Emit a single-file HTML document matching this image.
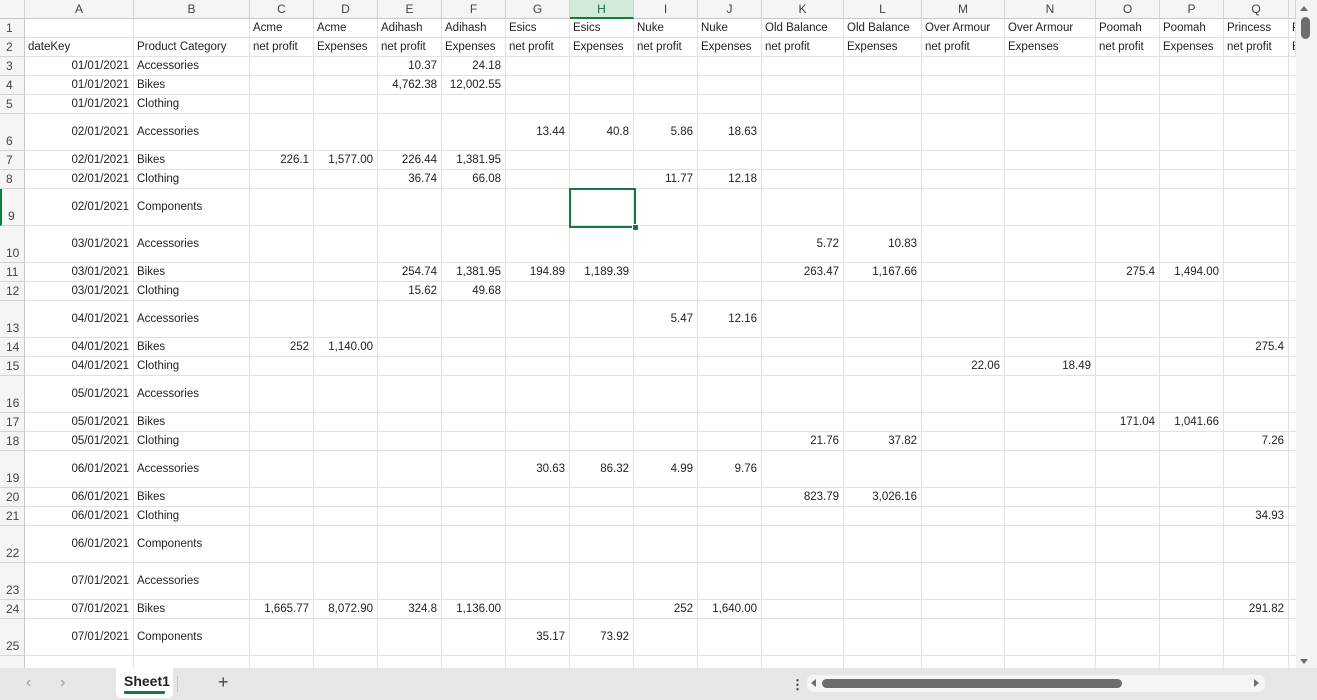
<!DOCTYPE html>
<html><head><meta charset="utf-8"><style>
body{margin:0;width:1317px;height:700px;overflow:hidden;background:#fff;font-family:"Liberation Sans",sans-serif;font-size:11.5px;color:#222;position:relative}
.c{position:absolute;box-sizing:border-box;border-right:1px solid #e1e1e1;border-bottom:1px solid #e1e1e1;white-space:nowrap;overflow:hidden;display:flex;align-items:center;padding:0 3px}
.r{justify-content:flex-end;padding-right:4px}
.ch{position:absolute;top:0;height:19px;box-sizing:border-box;border-right:1px solid #d4d4d4;border-bottom:1px solid #c8c8c8;background:#f5f5f5;color:#444;font-size:12px;display:flex;align-items:center;justify-content:center}
.rh{position:absolute;left:0;width:25px;box-sizing:border-box;border-bottom:1px solid #d4d4d4;border-right:1px solid #c8c8c8;background:#f5f5f5;color:#444;font-size:12px;display:flex;align-items:flex-end;padding:0 0 2px 6px}
</style></head><body>
<div id="g"></div>
<div style="position:absolute;left:569px;top:188px;width:67px;height:40px;box-sizing:border-box;border:2px solid #107c41"></div>
<div style="position:absolute;left:632px;top:224px;width:5px;height:5px;background:#107c41;border:1px solid #fff"></div>
<div style="position:absolute;left:1296px;top:0;width:21px;height:668px;background:#f3f3f3"></div>
<div style="position:absolute;left:1300px;top:6px;width:0;height:0;border-left:4px solid transparent;border-right:4px solid transparent;border-bottom:5px solid #6d6d6d"></div>
<div style="position:absolute;left:1301px;top:17px;width:9px;height:22px;border-radius:5px;background:#6d6d6d"></div>
<div style="position:absolute;left:1300px;top:659px;width:0;height:0;border-left:4px solid transparent;border-right:4px solid transparent;border-top:5px solid #6d6d6d"></div>
<div style="position:absolute;left:0;top:668px;width:1317px;height:32px;background:#e6e6e6"></div>
<div style="position:absolute;left:26px;top:674px;color:#999;font-size:16px">&#8249;</div>
<div style="position:absolute;left:60px;top:674px;color:#999;font-size:16px">&#8250;</div>
<div style="position:absolute;left:116px;top:668px;width:57px;height:30px;background:#fff;border-radius:0 0 5px 5px"></div>
<div style="position:absolute;left:124px;top:673px;font-weight:bold;font-size:14px;color:#222">Sheet1</div>
<div style="position:absolute;left:124px;top:691px;width:41px;height:3px;background:#107c41;border-radius:1px"></div>
<div style="position:absolute;left:177px;top:676px;width:1px;height:16px;background:#c8c8c8"></div>
<div style="position:absolute;left:218px;top:672px;font-size:18px;color:#444">+</div>
<div style="position:absolute;left:791px;top:677px;font-size:13px;color:#333;font-weight:bold">&#8942;</div>
<div style="position:absolute;left:807px;top:675px;width:458px;height:17px;background:#f5f5f5;border-radius:6px"></div>
<div style="position:absolute;left:811px;top:679px;width:0;height:0;border-top:4px solid transparent;border-bottom:4px solid transparent;border-right:5px solid #6d6d6d"></div>
<div style="position:absolute;left:822px;top:679px;width:300px;height:9px;background:#6d6d6d;border-radius:5px"></div>
<div style="position:absolute;left:1254px;top:679px;width:0;height:0;border-top:4px solid transparent;border-bottom:4px solid transparent;border-left:5px solid #6d6d6d"></div>
<script>
var xs=[25,134,250,314,378,442,506,570,634,698,762,844,922,1005,1096,1160,1224,1289,1296];
var L="ABCDEFGHIJKLMNOPQR";
var hs=[19,19,19,19,19,37,19,19,37,37,19,19,37,19,19,37,19,19,37,19,19,37,37,19,37,19];
var ys=[19];for(var i=0;i<hs.length;i++)ys.push(ys[i]+hs[i]);
var D={};function s(r,c,v){D[r+c]=v}
var h1=["Acme","Acme","Adihash","Adihash","Esics","Esics","Nuke","Nuke","Old Balance","Old Balance","Over Armour","Over Armour","Poomah","Poomah","Princess","P"];
for(var i=0;i<16;i++){s(1,L[i+2],h1[i]);s(2,L[i+2],i%2?"Expenses":"net profit")}
s(2,"A","dateKey");s(2,"B","Product Category");
var rows=[[3,"01","Accessories"],[4,"01","Bikes"],[5,"01","Clothing"],[6,"02","Accessories"],[7,"02","Bikes"],[8,"02","Clothing"],[9,"02","Components"],[10,"03","Accessories"],[11,"03","Bikes"],[12,"03","Clothing"],[13,"04","Accessories"],[14,"04","Bikes"],[15,"04","Clothing"],[16,"05","Accessories"],[17,"05","Bikes"],[18,"05","Clothing"],[19,"06","Accessories"],[20,"06","Bikes"],[21,"06","Clothing"],[22,"06","Components"],[23,"07","Accessories"],[24,"07","Bikes"],[25,"07","Components"]];
rows.forEach(function(r){s(r[0],"A",r[1]+"/01/2021");s(r[0],"B",r[2])});
var v={3:{E:"10.37",F:"24.18"},4:{E:"4,762.38",F:"12,002.55"},6:{G:"13.44",H:"40.8",I:"5.86",J:"18.63"},7:{C:"226.1",D:"1,577.00",E:"226.44",F:"1,381.95"},8:{E:"36.74",F:"66.08",I:"11.77",J:"12.18"},10:{K:"5.72",L:"10.83"},11:{E:"254.74",F:"1,381.95",G:"194.89",H:"1,189.39",K:"263.47",L:"1,167.66",O:"275.4",P:"1,494.00"},12:{E:"15.62",F:"49.68"},13:{I:"5.47",J:"12.16"},14:{C:"252",D:"1,140.00",Q:"275.4"},15:{M:"22.06",N:"18.49"},17:{O:"171.04",P:"1,041.66"},18:{K:"21.76",L:"37.82",Q:"7.26"},19:{G:"30.63",H:"86.32",I:"4.99",J:"9.76"},20:{K:"823.79",L:"3,026.16"},21:{Q:"34.93"},24:{C:"1,665.77",D:"8,072.90",E:"324.8",F:"1,136.00",I:"252",J:"1,640.00",Q:"291.82"},25:{G:"35.17",H:"73.92"}};
for(var r in v)for(var c in v[r])s(r,c,v[r][c]);
var o='<div class="ch" style="left:0;width:25px"></div>';
for(var i=0;i<18;i++){var sel=L[i]=="H";o+='<div class="ch" style="left:'+xs[i]+'px;width:'+(xs[i+1]-xs[i])+'px;'+(sel?'background:#d3e9da;color:#0e6b37;border-bottom:2px solid #107c41;':'')+'">'+(i<17?L[i]:'')+'</div>'}
for(var r=1;r<=26;r++){var y=ys[r-1],h=hs[r-1];var sel=r==9;
o+='<div class="rh" style="top:'+y+'px;height:'+h+'px;'+(sel?'border-left:2px solid #107c41;':'')+'">'+(r<26?r:'')+'</div>';
for(var i=0;i<18;i++){var k=r+L[i],t=D[k]||"";var right=(i==0&&r>2)||(r>2&&i>1);
o+='<div class="c'+(right?' r':'')+'" style="left:'+xs[i]+'px;top:'+y+'px;width:'+(xs[i+1]-xs[i])+'px;height:'+h+'px">'+t+'</div>'}}
document.getElementById("g").innerHTML=o;
</script>
</body></html>
